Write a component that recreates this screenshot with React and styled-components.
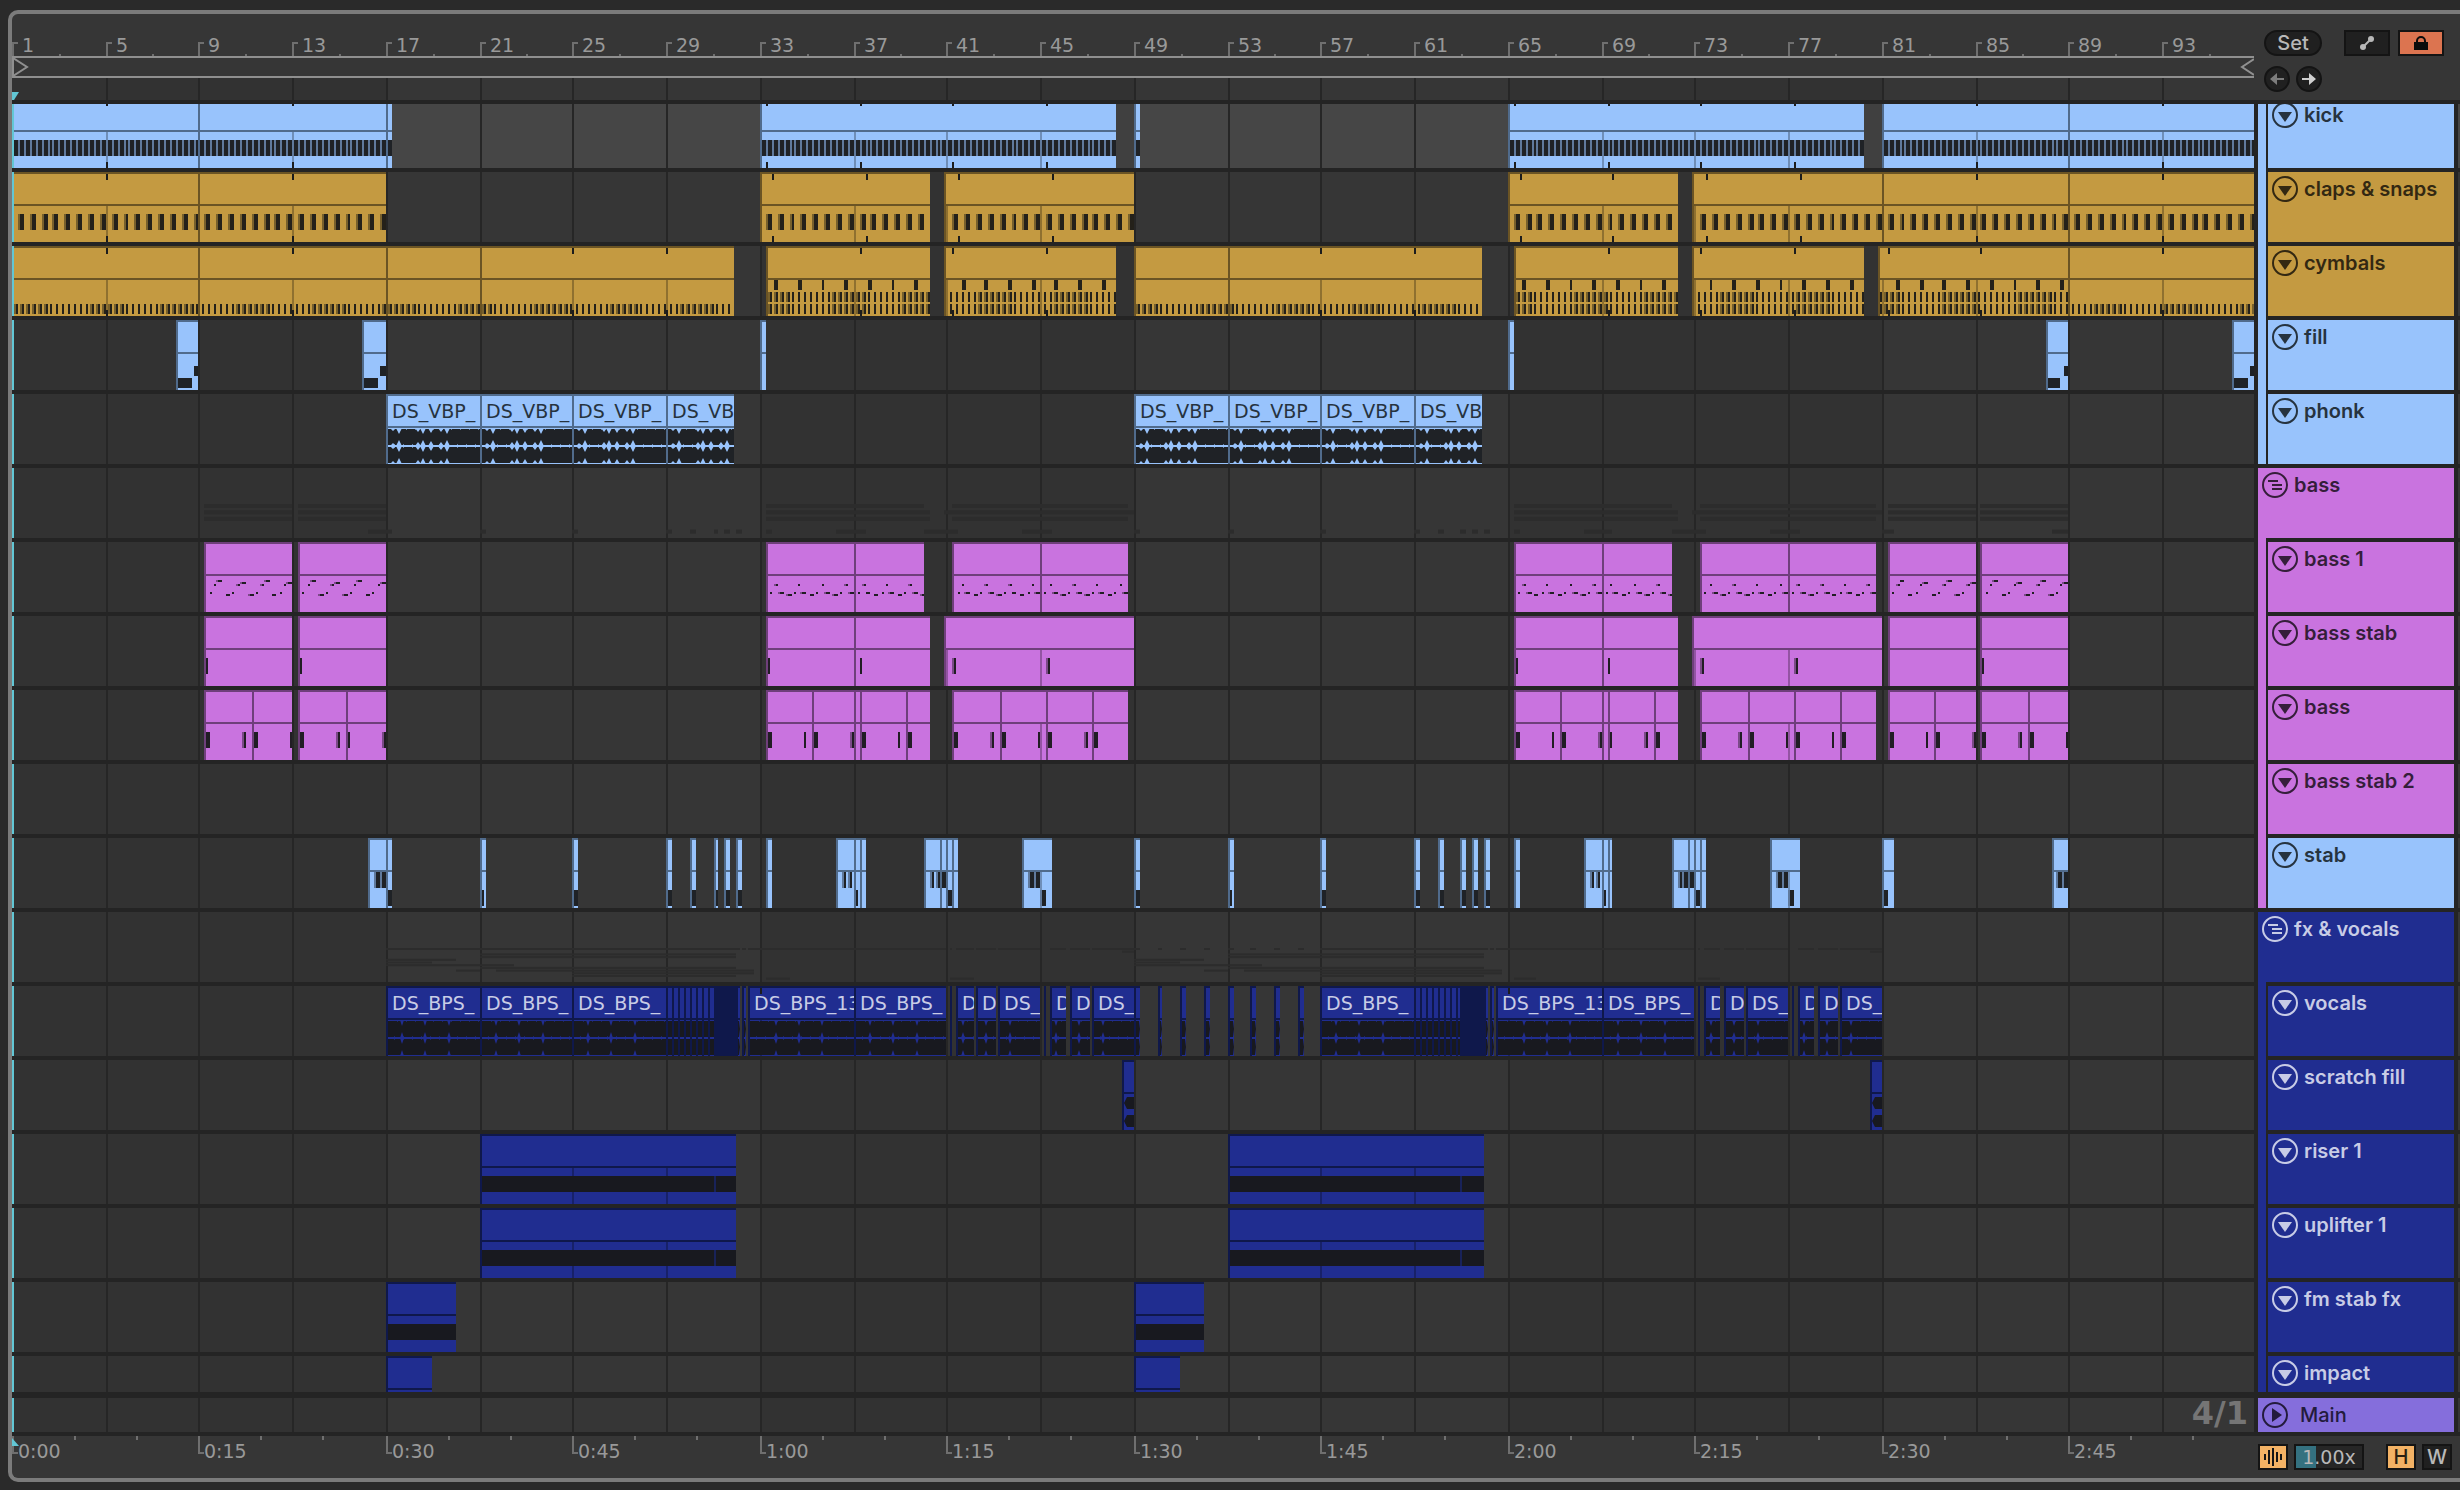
import React, { useState } from 'react';
import styled, { createGlobalStyle, css } from 'styled-components';

const colors = {
  page: '#2a2a2a',
  panel: '#363636',
  gap: '#242424',
  grid: '#262626',
  laneDark: '#323232',
  laneLight: '#363636',
  frame: '#7b7b7b',
  rulerText: '#999999',
  tick: '#6f6f6f',
  loop: '#8f8f8f',
  cyan: '#62c6d4',
  control: '#202020',
  controlBorder: '#141414',
  controlText: '#b8b8b8',
  orange: '#f3b265',
  lock: '#dc7450'
};

const palette = {
  blue: { fill: '#98c3fc', line: '#506b8c', note: '#1f2226', soft: '#607a9d', text: '#26333f' },
  gold: { fill: '#c49a41', line: '#6b5424', note: '#24211a', soft: '#77602c', text: '#332812' },
  pink: { fill: '#c973df', line: '#6f3f7b', note: '#211d24', soft: '#7b4a88', text: '#351e3a' },
  navy: { fill: '#202d90', line: '#0f184b', note: '#18191f', soft: '#182259', text: '#c8cce6' },
  main: { fill: '#856edc', text: '#231b3c' }
};

const fonts = {
  ui: "Inter, 'Liberation Sans', sans-serif",
  timeline: "'DejaVu Sans', 'Noto Sans', sans-serif"
};

// Timeline positions are kept on a 2px raster
const UNIT = 2;
const BAR = 11.685;
const unit = bar => Math.round((bar - 1) * BAR);
const snap = bar => unit(bar) * UNIT;

const range = (from, to, step) => {
  const list = [];
  for (let i = from; i < to; i += step) list.push(i);
  return list;
};

const gridBars = range(5, 97, 4);

const gridImage = color =>
  `linear-gradient(to right, ${gridBars
    .map(b => `transparent ${snap(b - 4) + (b > 5 ? 2 : 0)}px ${snap(b)}px, ${color} ${snap(b)}px ${snap(b) + 2}px`)
    .join(', ')}, transparent ${snap(93) + 2}px)`;

const laneGrid = gridImage(colors.grid);
const bodyGrid = gridImage('rgba(0, 0, 0, 0.27)');

/* ---------- song data ---------- */

const clip = (start, end, extra) => ({ start, end, ...extra });
const clips = pairs => pairs.map(([start, end, extra]) => clip(start, end, extra));
const shift = (list, by) => list.map(c => ({ ...c, start: c.start + by, end: c.end + by }));

const hatsLow = { phase: 0.125, every: 0.25, len: 0.125, y: 24, h: 10 };
const hatsMid = { ...hatsLow, y: 12 };
const hatsTop = { phase: 0.625, every: 1, len: 0.155, y: 0, h: 10, hard: true };
const fullHats = [hatsLow, hatsMid, hatsTop];

const bassNotes = [
  { phase: 0.1875, every: 1, len: 0.0625, y: 16, h: 2 },
  { phase: 0.375, every: 1, len: 0.125, y: 8, h: 2 },
  { phase: 0.875, every: 1, len: 0.21, y: 18, h: 2, core: 2 }
];
const bassRise = [
  ...bassNotes,
  { phase: 0.5, every: 2, len: 0.25, y: 4, h: 2, core: 2 },
  { phase: 1.5, every: 2, len: 0.25, y: 6, h: 2, core: 2 }
];
const bassFlat = [...bassNotes, { phase: 0.5, every: 1, len: 0.25, y: 16, h: 2, core: 2 }];

const subNotes = [
  { phase: 0, every: 9, len: 0.25, y: 8, h: 16 },
  { phase: 1.625, every: 9, len: 0.125, y: 8, h: 16 }
];

const phonkWave = [[5, 3], [11, 6], [30, 4], [35, 6], [43, 5], [53, 4], [59, 6]];
const voiceWave = [[14, 6], [37, 6], [61, 6]];

const stabDrop = [[36.25, 37], [37, 37.25], [37.25, 37.5], [40, 40.7], [40.7, 41], [41, 41.25], [41.25, 41.5], [44.25, 45.5]];
const stabHits = [[21, 21.25], [25, 25.25], [29, 29.25], [30, 30.25], [31, 31.1875], [31.5, 31.75], [32, 32.25], [33.25, 33.5]];
const stabHigh = [[36.5, 0.17], [36.75, 0.17], [40.25, 0.17], [40.5, 0.19], [40.7, 0.25], [44.5, 0.25], [44.75, 0.25]];
const stabLow = [[17, 0.25], [21, 0.17], [25, 0.25], [29, 0.25], [30, 0.25], [31, 0.19], [31.5, 0.25], [32, 0.25], [37, 0.17], [41, 0.25], [45, 0.25]];
const again = list => [...list, ...list.map(([a, ...rest]) => [a + 32, ...rest])];
const againBoth = list => [...list, ...list.map(([a, b]) => [a + 32, b + 32])];

const BPS = 'DS_BPS_';
const VBP = 'DS_VBP_';

const voicePhrase = [
  clip(25, 29, { name: BPS, wave: voiceWave }),
  ...range(29, 31, 0.25).map(b => clip(b, b + 0.25, { wave: [] })),
  clip(31, 32, { solid: true }),
  clip(32, 32.16, { lens: true }),
  clip(32.24, 32.41, { lens: true }),
  clip(32.5, 37, { name: 'DS_BPS_13', wave: [[26, 6], [49, 6], [72, 6]], loops: [33] }),
  clip(37, 41, { name: BPS, wave: voiceWave }),
  clip(41.125, 41.2, { solid: true }),
  clip(41.375, 42.125, { name: 'D', wave: [[5, 6]] }),
  clip(42.25, 43.09, { name: 'D', wave: [[8, 6]] }),
  clip(43.1875, 45, { name: 'DS_', wave: [[10, 6]] }),
  clip(45.125, 45.2, { solid: true }),
  clip(45.4, 46.1, { name: 'D', wave: [[4, 6]] }),
  clip(46.25, 47.125, { name: 'D', wave: [[7, 6]] }),
  clip(47.2, 49, { name: 'DS_', wave: [[9, 6]] })
];

const tracks = [
  {
    name: 'kick', color: 'blue', group: 'blue', selected: true,
    loops: [5, 13, 33.25, 37.25, 41.25, 45.25, 65.25, 69.25, 73.25, 77.25, 85, 93],
    notes: [{ phase: 0, every: 0.25, len: 0.25, y: 8, h: 16 }],
    clips: clips([[1, 9], [9, 17], [17, 17.25], [33, 48.25], [49, 49.25], [65, 80.25], [81, 89], [89, 98]])
  },
  {
    name: 'claps & snaps', color: 'gold', group: 'blue',
    loops: [5, 13, 33.5, 37.5, 41.5, 45.5, 65.5, 69.5, 73.5, 77.5, 85, 93],
    notes: [{ phase: 0.25, every: 0.5, len: 0.25, y: 8, h: 16 }],
    clips: clips([[1, 9], [9, 17], [33, 40.25], [40.875, 49], [65, 72.25], [72.875, 81], [81, 89], [89, 98]])
  },
  {
    name: 'cymbals', color: 'gold', group: 'blue',
    loops: [5, 13, 25, 29, 37.25, 41.25, 45.25, 57, 61, 69.25, 73.25, 77.25, 81.25, 85.25, 93],
    notes: [hatsLow],
    clips: clips([
      [1, 9], [9, 17], [17, 21], [21, 31.875],
      [33.25, 40.25, { notes: fullHats }], [40.875, 48.25, { notes: fullHats, from: 41 }],
      [49, 53], [53, 63.875],
      [65.25, 72.25, { notes: fullHats }], [72.875, 80.25, { notes: fullHats, from: 73 }],
      [80.875, 89, { notes: fullHats }], [89, 98]
    ])
  },
  {
    name: 'fill', color: 'blue', group: 'blue',
    notes: [
      { at: [[8, 0.67], [16, 0.67], [88, 0.6], [96, 0.67]], y: 24, h: 10, hard: true },
      { at: [[8.75, 0.25], [16.75, 0.25], [88.8, 0.2], [96.75, 0.25]], y: 12, h: 10, hard: true }
    ],
    clips: clips([[8, 9], [16, 17], [33, 33.25], [65, 65.25], [88, 89], [96, 97]])
  },
  {
    name: 'phonk', color: 'blue', group: 'blue', last: true,
    clips: againBoth([[17, 21], [21, 25], [25, 29], [29, 31.875]]).map(([a, b]) =>
      clip(a, b, { name: b - a < 4 ? 'DS_VB' : VBP, wave: phonkWave })
    )
  },
  { name: 'bass', color: 'pink', group: 'pink', isGroup: true, rows: [6, 7, 8, 9, 10], pitch: 6.4, thick: 4 },
  {
    name: 'bass 1', color: 'pink', group: 'pink', anchored: true, notes: bassFlat,
    clips: clips([
      [9.25, 13, { notes: bassRise }], [13.25, 17, { notes: bassRise }],
      ...againBoth([[33.25, 37], [37, 40], [41.25, 45], [45, 48.75]]),
      [81.25, 85, { notes: bassRise }], [85.25, 89, { notes: bassRise }]
    ])
  },
  {
    name: 'bass stab', color: 'pink', group: 'pink',
    notes: [{ at: [9.25, 13.25, 33.25, 37.25, 41.25, 45.25, 65.25, 69.25, 73.25, 77.25, 81.25, 85.25].map(b => [b, 0.15]), y: 8, h: 16 }],
    clips: clips([
      [9.25, 13], [13.25, 17], ...againBoth([[33.25, 37], [37, 40.25], [40.875, 49]]), [81.25, 85], [85.25, 89]
    ])
  },
  {
    name: 'bass', color: 'pink', group: 'pink', anchored: true, notes: subNotes,
    clips: clips([
      [9.25, 11.25], [11.25, 13], [13.25, 15.25], [15.25, 17],
      ...againBoth([[33.25, 35.25], [35.25, 37], [37.25, 39.25], [39.25, 40.25], [41.25, 43.25], [43.25, 45.25], [45.25, 47.25], [47.25, 48.75]]),
      [37, 37.25, { notes: [] }], [69, 69.25, { notes: [] }],
      [81.25, 83.25], [83.25, 85], [85.25, 87.25], [87.25, 89]
    ])
  },
  { name: 'bass stab 2', color: 'pink', group: 'pink', clips: [] },
  {
    name: 'stab', color: 'blue', group: 'pink', last: true,
    notes: [
      { at: [[16.5, 0.25], [16.75, 0.25], ...again(stabHigh), [88.5, 0.25], [88.75, 0.25]], y: 0, h: 16 },
      { at: [...again(stabLow), [81, 0.25]], y: 18, h: 16 }
    ],
    clips: clips([[16.25, 17], [17, 17.25], ...againBoth(stabHits), ...againBoth(stabDrop), [49, 49.25], [81, 81.5], [88.25, 89]])
  },
  {
    name: 'fx & vocals', color: 'navy', group: 'navy', isGroup: true, rows: [12, 13, 14, 15, 16, 17], pitch: 2.7, thick: 2,
    hidden: [
      againBoth([[17, 22.5]]),
      againBoth([[21, 32]]),
      againBoth([[20, 21], [21.75, 32.75]]),
      againBoth([[25, 32.75]]),
      againBoth([[25, 32]]),
      againBoth([[33.25, 34.25], [41.125, 42.125]])
    ]
  },
  {
    name: 'vocals', color: 'navy', group: 'navy',
    clips: [
      clip(17, 21, { name: BPS, wave: voiceWave }),
      clip(21, 25, { name: BPS, wave: voiceWave }),
      ...voicePhrase,
      ...[49, 50, 51, 52, 53, 54, 55, 56].map(b => clip(b, b + (b === 50 ? 0.19 : 0.25), { lens: true })),
      ...shift(voicePhrase, 32).map(c => (c.loops ? { ...c, loops: [65] } : c))
    ]
  },
  {
    name: 'scratch fill', color: 'navy', group: 'navy',
    clips: clips([[48.5, 49, { burst: true }], [80.5, 81, { burst: true }]])
  },
  {
    name: 'riser 1', color: 'navy', group: 'navy',
    notes: [{ at: [[21, 10], [31, 1], [53, 10], [63, 1]], y: 8, h: 16 }],
    clips: clips([[21, 32], [53, 64]])
  },
  {
    name: 'uplifter 1', color: 'navy', group: 'navy',
    notes: [{ at: [[21, 10], [31, 1], [53, 10], [63, 1]], y: 8, h: 16 }],
    clips: clips([[21, 32], [53, 64]])
  },
  {
    name: 'fm stab fx', color: 'navy', group: 'navy',
    notes: [{ at: [[17, 3], [49, 3]], y: 8, h: 16 }],
    clips: clips([[17, 20], [49, 52]])
  },
  { name: 'impact', color: 'navy', group: 'navy', last: true, clips: clips([[17, 19], [49, 51]]) }
];

/* ---------- clip drawings ---------- */

// Every note starts with a half-toned column unless it is a hard one
const notePaths = (specs, item, anchored) => {
  let soft = '';
  let solid = '';
  const origin = unit(item.start) * UNIT + UNIT;
  specs.forEach(spec => {
    const base = anchored ? item.start : 1;
    const hits = spec.at ? spec.at : [];
    if (!spec.at) {
      let n = Math.max(0, Math.ceil((item.start - base - spec.phase) / spec.every - 0.001));
      for (; base + spec.phase + n * spec.every < item.end - 0.001; n += 1) {
        hits.push([base + spec.phase + n * spec.every, spec.len]);
      }
    }
    hits.forEach(([bar, len]) => {
      if (bar < (item.from || item.start) - 0.001 || bar >= item.end - 0.001) return;
      const s = unit(bar);
      const w = Math.max(1, unit(bar + len) - s);
      const core = spec.hard ? w : Math.max(1, spec.core ? Math.min(spec.core, w) : w - 1);
      const x = s * UNIT - origin;
      const coreX = x + (w - core) * UNIT;
      if (core < w) soft += `M${x} ${spec.y}h${(w - core) * UNIT}v${spec.h}H${x}z`;
      solid += `M${coreX} ${spec.y}h${core * UNIT}v${spec.h}H${coreX}z`;
    });
  });
  return { soft, solid };
};

const wavePath = (peaks, small) =>
  peaks
    .map(([x, h]) => {
      const w = small ? 2 : 3;
      return [
        `M${x - w} 18L${x} ${18 - h}L${x + w} 18L${x} ${18 + h}z`,
        `M${x - w} 0H${x + w}L${x} ${h}z`,
        `M${x - w} 36H${x + w}L${x} ${36 - h}z`
      ].join('');
    })
    .join('');

function ClipArt({ item, track }) {
  const tone = palette[track.color];
  const width = snap(item.end) - snap(item.start) - 2;
  if (width <= 0) return null;

  if (item.wave) {
    const small = track.color === 'navy';
    return (
      <Art width={width} height="36" aria-hidden="true">
        <rect x="0" y="1" width={width} height="34" fill={tone.note} />
        <rect x="0" y="17" width={width} height="2" fill={tone.fill} />
        <path d={wavePath(item.wave, small)} fill={tone.fill} />
        <path
          d={range(6, width, 9).map(x => `M${x} 16h1v4h-1zM${x + 3} 1h1v1h-1z`).join('')}
          fill={tone.fill}
          opacity="0.6"
        />
      </Art>
    );
  }
  if (item.lens) {
    return (
      <Art width={width} height="36" aria-hidden="true">
        <path
          d={`M0 1H${width - 1}L${width} 9L${width - 1} 17H0zM0 19H${width - 1}L${width} 27L${width - 1} 35H0z`}
          fill={tone.note}
        />
      </Art>
    );
  }
  if (item.burst) {
    return (
      <Art width={width} height="36" aria-hidden="true">
        <path d="M0 9L3 3H10V15H3zM0 27L3 21H10V33H3z" fill={tone.note} />
      </Art>
    );
  }
  const paths = notePaths(item.notes || track.notes || [], item, track.anchored);
  return (
    <Art width={width} height="36" shapeRendering="crispEdges" aria-hidden="true">
      <path d={paths.soft} fill={tone.soft} />
      <path d={paths.solid} fill={tone.note} />
    </Art>
  );
}

function Clip({ item, track }) {
  const left = snap(item.start);
  const loops = (item.loops || track.loops || []).filter(b => b > item.start && b < item.end);
  return (
    <ClipBox $tone={track.color} $solid={item.solid} style={{ left, width: snap(item.end) - left }}>
      <ClipName>{item.name}</ClipName>
      <ClipBody style={{ backgroundPositionX: -left - 2 }}>
        <ClipArt item={item} track={track} />
      </ClipBody>
      {loops.map(b => (
        <LoopTick key={b} $bottom={!item.wave} style={{ left: snap(b) - left - 2 }} />
      ))}
    </ClipBox>
  );
}

function GroupOverview({ track }) {
  const rows = [...track.rows.map(i => tracks[i].clips.map(c => [c.start, c.end])), ...(track.hidden || [])];
  return (
    <Overview height="70" width="2300" aria-hidden="true">
      {rows.map((row, i) =>
        row.map(([a, b]) => (
          <rect
            key={`${i}-${a}`}
            x={snap(a)}
            y={36 + i * track.pitch}
            width={snap(b) - snap(a)}
            height={track.thick}
            fill="#2c2c2c"
          />
        ))
      )}
    </Overview>
  );
}

/* ---------- styles ---------- */

const GlobalStyle = createGlobalStyle`
  * {
    box-sizing: border-box;
  }
  body {
    margin: 0;
    background: ${colors.page};
    font-family: ${fonts.ui};
    font-size: 20px;
    overflow: hidden;
  }
  button, input {
    font: inherit;
    margin: 0;
    padding: 0;
  }
`;

const Page = styled.main`
  height: 100vh;
  padding: 10px 0 8px 8px;
`;

const Frame = styled.div`
  height: 100%;
  display: flex;
  flex-direction: column;
  overflow: hidden;
  border: 4px solid ${colors.frame};
  border-right: 0;
  border-radius: 10px 0 0 10px;
  background: ${colors.panel};
`;

const sideWidth = '206px';

const Top = styled.header`
  display: grid;
  grid-template-columns: minmax(0, 1fr) ${sideWidth};
`;

const Ruler = styled.div`
  height: 42px;
  display: flex;
  align-items: flex-end;
  overflow: hidden;
`;

const Mark = styled.div`
  position: relative;
  flex: none;
  height: 30px;
  padding-left: 10px;
  font-family: ${fonts.timeline};
  font-size: 19px;
  line-height: 38px;
  color: ${colors.rulerText};

  &::before {
    content: '';
    position: absolute;
    left: 0;
    bottom: 0;
    width: 4px;
    height: 12px;
    border-left: 2px solid ${colors.tick};
    border-top: 2px solid ${colors.tick};
  }

  &::after {
    content: '';
    position: absolute;
    left: 50%;
    bottom: 0;
    width: 2px;
    height: 2px;
    background: ${colors.tick};
  }
`;

const LoopBar = styled.div`
  height: 22px;
  display: flex;
  justify-content: space-between;
  border-top: 2px solid ${colors.loop};
  border-bottom: 2px solid ${colors.loop};
`;

const lane = css`
  position: relative;
  overflow: hidden;
  background: ${laneGrid},
    repeating-linear-gradient(
      to right,
      ${p => (p.$selected ? '#404040' : colors.laneDark)} 0 374px,
      ${p => (p.$selected ? '#464646' : colors.laneLight)} 374px 748px
    );
`;

const Scrub = styled.div`
  ${lane}
  height: 22px;
  display: flex;
  align-items: flex-end;
`;

const Controls = styled.div`
  display: flex;
  flex-direction: column;
  gap: 10px;
  padding: 16px 16px 0 10px;
`;

const ControlRow = styled.div`
  display: flex;
  align-items: center;
  gap: ${p => p.$gap || 6}px;
`;

const Button = styled.button`
  flex: none;
  width: ${p => p.$width || 26}px;
  height: 26px;
  display: flex;
  align-items: center;
  justify-content: center;
  border: 2px solid ${colors.controlBorder};
  border-radius: ${p => (p.$round ? 13 : 0)}px;
  background: ${p => p.$fill || colors.control};
  color: ${p => p.$color || colors.controlText};
  font-weight: 500;
  line-height: 22px;
`;

const Spacer = styled.span`
  flex: 1;
`;

const Arrangement = styled.section`
  flex: 1 1 0;
  min-height: 0;
  padding-top: 4px;
  background: ${colors.gap};
`;

const Scroller = styled.div`
  height: 100%;
  overflow: hidden;
`;

const TrackList = styled.div`
  display: flex;
  flex-direction: column;
  gap: 4px;
  margin-top: -6px;
`;

const TrackRow = styled.div`
  flex: none;
  height: ${p => (p.$main ? 34 : 70)}px;
  display: grid;
  grid-template-columns: minmax(0, 1fr) 196px 2px;
  column-gap: 4px;
`;

const Lane = styled.div`
  ${lane}

  &::after {
    content: '';
    position: absolute;
    inset: 0 auto 0 0;
    width: 2px;
    background: ${colors.cyan};
  }
`;

const Sliver = styled.div`
  background: ${p => (p.$selected ? '#464646' : colors.laneLight)};
`;

const HeaderCell = styled.div`
  position: relative;
  padding-left: ${p => (p.$flush ? 0 : 10)}px;

  &::before {
    content: '';
    position: absolute;
    left: 0;
    top: 0;
    bottom: ${p => (p.$last ? 0 : -4)}px;
    width: 8px;
    background: ${p => palette[p.$group].fill};
  }
`;

const Header = styled.div`
  position: relative;
  height: 100%;
  display: flex;
  align-items: flex-start;
  gap: ${p => (p.$wide ? 12 : 6)}px;
  padding: 4px;
  background: ${p => palette[p.$tone].fill};
  color: ${p => palette[p.$tone].text};
  font-weight: ${p => (p.$wide ? 500 : 600)};
  line-height: 26px;
  white-space: nowrap;
`;

const FoldButton = styled.button`
  flex: none;
  width: 26px;
  height: 26px;
  border: 0;
  background: none;
  color: inherit;
  line-height: 0;
`;

const ClipBox = styled.div`
  position: absolute;
  top: 0;
  height: 70px;
  overflow: hidden;
  border-left: 2px solid ${p => palette[p.$tone].line};
  background: ${p => (p.$solid ? palette[p.$tone].line : palette[p.$tone].fill)};
  color: ${p => palette[p.$tone].text};
  --line: ${p => palette[p.$tone].line};
`;

const ClipName = styled.div`
  height: 34px;
  padding-left: 4px;
  border-top: 2px solid var(--line);
  border-bottom: 2px solid var(--line);
  font-family: ${fonts.timeline};
  font-size: 19px;
  line-height: 30px;
  white-space: nowrap;
  overflow: hidden;
`;

const ClipBody = styled.div`
  height: 36px;
  background-image: ${bodyGrid};
  background-size: 2300px 36px;
  background-repeat: no-repeat;
`;

const LoopTick = styled.span`
  position: absolute;
  top: 2px;
  bottom: 0;
  width: 2px;
  background: linear-gradient(#1c1c1c, #1c1c1c) top / 2px 6px no-repeat,
    linear-gradient(#1c1c1c, #1c1c1c) bottom / 2px ${p => (p.$bottom ? 6 : 0)}px no-repeat;
`;

const Art = styled.svg`
  display: block;
`;

const Overview = styled.svg`
  display: block;
`;

const MainRow = styled.div`
  flex: none;
  padding: 6px 0 4px;
  background: ${colors.gap};
`;

const Signature = styled.span`
  display: block;
  padding-right: 6px;
  color: #757575;
  font-family: ${fonts.timeline};
  font-size: 32px;
  font-weight: 700;
  line-height: 30px;
  text-align: right;
`;

const Bottom = styled.footer`
  flex: none;
  height: 42px;
  display: grid;
  grid-template-columns: minmax(0, 1fr) 202px;
  column-gap: 4px;
`;

const TimeRuler = styled.div`
  position: relative;
  display: flex;
  overflow: hidden;
`;

const minor = `linear-gradient(${colors.tick}, ${colors.tick})`;

const TimeMark = styled.div`
  position: relative;
  flex: none;
  padding-left: 6px;
  background: ${minor} 62px 0 / 2px 4px no-repeat, ${minor} 124px 0 / 2px 4px no-repeat;
  color: ${colors.rulerText};
  font-family: ${fonts.timeline};
  font-size: 19px;
  line-height: 30px;

  &::before {
    content: '';
    position: absolute;
    left: 0;
    top: 0;
    width: 4px;
    height: 16px;
    border-left: 2px solid ${colors.tick};
    border-bottom: 2px solid ${colors.tick};
  }
`;

const StartMarker = styled.svg`
  position: absolute;
  left: 0;
  top: 2px;
`;

const Status = styled.div`
  display: flex;
  align-items: center;
  gap: 6px;
  padding-right: 8px;
`;

const Zoom = styled.input`
  width: 70px;
  height: 26px;
  border: 2px solid ${colors.controlBorder};
  border-radius: 0;
  background: linear-gradient(to right, #347180 20px, #262626 20px);
  color: ${colors.controlText};
  font-family: ${fonts.timeline};
  font-size: 19px;
  text-align: center;
`;

/* ---------- icons ---------- */

function CircleIcon({ kind }) {
  return (
    <svg width="26" height="26" viewBox="0 0 26 26" fill="currentColor" aria-hidden="true">
      <circle cx="13" cy="13" r="12" fill="none" stroke="currentColor" strokeWidth="2" />
      {kind === 'fold' && <path d="M6 10H20L13 20z" />}
      {kind === 'play' && <path d="M10 6L20 13L10 20z" />}
      {kind === 'group' && <path d="M6 8h10v2H6zM10 12h10v2H10zM10 16h10v2H10z" />}
    </svg>
  );
}

function Arrow({ back }) {
  return (
    <svg width="14" height="12" viewBox="0 0 14 12" fill="currentColor" aria-hidden="true">
      <path d={back ? 'M0 6L7 0V5H14V7H7V12z' : 'M14 6L7 0V5H0V7H7V12z'} />
    </svg>
  );
}

/* ---------- page ---------- */

function App() {
  const [zoom, setZoom] = useState('1.00x');

  const renderTrack = track => (
    <TrackRow key={`${track.name}-${track.isGroup ? 'group' : 'track'}`}>
      <Lane $selected={track.selected}>
        {track.isGroup ? (
          <GroupOverview track={track} />
        ) : (
          track.clips.map(item => <Clip key={item.start} item={item} track={track} />)
        )}
      </Lane>
      <HeaderCell $group={track.group} $last={track.last} $flush={track.isGroup}>
        <Header $tone={track.color}>
          <FoldButton aria-label={`Fold ${track.name}`}>
            <CircleIcon kind={track.isGroup ? 'group' : 'fold'} />
          </FoldButton>
          <span>{track.name}</span>
        </Header>
      </HeaderCell>
      <Sliver $selected={track.selected} />
    </TrackRow>
  );

  return (
    <Page>
      <GlobalStyle />
      <Frame>
        <Top>
          <div>
            <Ruler>
              {range(1, 97, 4).map(b => (
                <Mark key={b} style={{ width: snap(b + 4) - snap(b) }}>
                  {b}
                </Mark>
              ))}
            </Ruler>
            <LoopBar>
              <svg width="18" height="18" viewBox="0 0 18 18" fill="none" stroke={colors.loop} strokeWidth="2">
                <path d="M1 0V18M1 0L15 9L1 18" />
              </svg>
              <svg width="14" height="18" viewBox="0 0 14 18" fill="none" stroke={colors.loop} strokeWidth="2">
                <path d="M14 1L2 9L14 17" />
              </svg>
            </LoopBar>
            <Scrub>
              <svg width="8" height="8" viewBox="0 0 8 8">
                <path d="M0 0H7L2 8H0z" fill={colors.cyan} />
              </svg>
            </Scrub>
          </div>
          <Controls>
            <ControlRow $gap={8}>
              <Button $width={58} $round>Set</Button>
              <Spacer />
              <Button $width={46} aria-label="Automation mode">
                <svg width="14" height="14" viewBox="0 0 14 14" fill="currentColor" aria-hidden="true">
                  <path d="M3 11L11 3" stroke="currentColor" strokeWidth="2" />
                  <circle cx="3" cy="11" r="3" />
                  <circle cx="11" cy="3" r="3" />
                </svg>
              </Button>
              <Button $width={46} $fill={colors.lock} $color="#0c0c0c" aria-label="Lock envelopes">
                <svg width="14" height="14" viewBox="0 0 14 14" aria-hidden="true">
                  <rect y="6" width="14" height="8" fill="currentColor" />
                  <path d="M3 6V5a4 4 0 0 1 8 0V6" fill="none" stroke="currentColor" strokeWidth="2" />
                </svg>
              </Button>
            </ControlRow>
            <ControlRow>
              <Button $round $color="#7c7c7c" aria-label="Previous locator">
                <Arrow back />
              </Button>
              <Button $round $color="#d0d0d0" aria-label="Next locator">
                <Arrow />
              </Button>
            </ControlRow>
          </Controls>
        </Top>

        <Arrangement>
          <Scroller>
            <TrackList>{tracks.map(renderTrack)}</TrackList>
          </Scroller>
        </Arrangement>

        <MainRow>
          <TrackRow $main>
            <Lane>
              <Signature>4/1</Signature>
            </Lane>
            <Header $tone="main" $wide>
              <FoldButton aria-label="Unfold Main">
                <CircleIcon kind="play" />
              </FoldButton>
              <span>Main</span>
            </Header>
            <Sliver />
          </TrackRow>
        </MainRow>

        <Bottom>
          <TimeRuler>
            {range(0, 12, 1).map(i => (
              <TimeMark key={i} style={{ width: snap(i * 8 + 9) - snap(i * 8 + 1) }}>
                {`${Math.floor(i / 4)}:${String((i % 4) * 15).padStart(2, '0')}`}
              </TimeMark>
            ))}
            <StartMarker width="8" height="8" viewBox="0 0 8 8">
              <path d="M0 0L7 8H0z" fill={colors.cyan} />
            </StartMarker>
          </TimeRuler>
          <Status>
            <Button $width={30} $fill={colors.orange} $color="#151515" aria-label="Optimize height">
              <svg width="18" height="18" viewBox="0 0 18 18" fill="currentColor" aria-hidden="true">
                <path d="M0 6h2v6H0zM4 2h2v14H4zM8 0h2v18H8zM12 4h2v10H12zM16 6h2v6H16z" />
              </svg>
            </Button>
            <Zoom aria-label="Waveform zoom" value={zoom} onChange={e => setZoom(e.target.value)} />
            <Spacer />
            <Button $width={30} $fill={colors.orange} $color="#2a1f12">H</Button>
            <Button $width={30}>W</Button>
          </Status>
        </Bottom>
      </Frame>
    </Page>
  );
}

export default App;
